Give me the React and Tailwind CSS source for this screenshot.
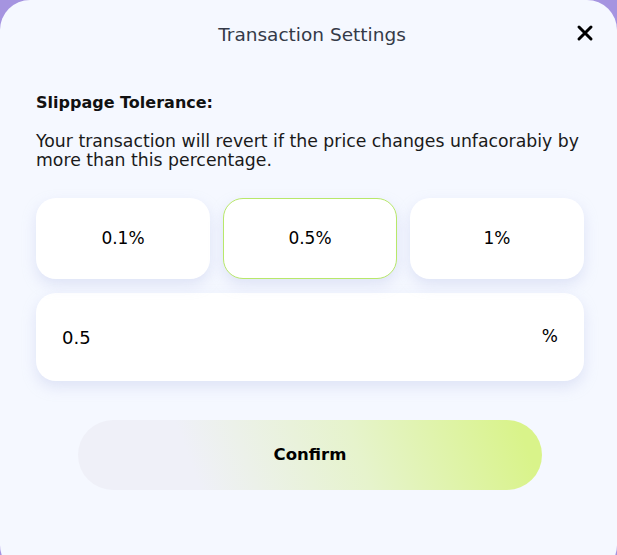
import React, { useState } from 'react'

const presets = ['0.1%', '0.5%', '1%']

export default function App() {
  const [selected, setSelected] = useState('0.5%')

  return (
    <div className="w-[617px] h-[555px] overflow-hidden bg-[#a594e0]" style={{ fontFamily: '"DejaVu Sans", "Noto Sans CJK KR", sans-serif' }}>
      <div className="w-[617px] h-[575px] rounded-[30px] bg-[#f5f8ff] pl-9 pr-[33px] pt-[21px]">
        {/* Header */}
        <div className="relative flex items-center justify-center h-[28px]">
          <h2 className="text-[18.5px] text-[#343a48] pl-[4px]">Transaction Settings</h2>
          <button className="absolute right-[-10px] top-[3px] text-black">
            <svg width="18" height="18" viewBox="0 0 18 18" fill="none" stroke="currentColor" strokeWidth="3" strokeLinecap="round">
              <path d="M3 3l12 12M15 3L3 15" />
            </svg>
          </button>
        </div>

        <p className="mt-[43px] text-[16px] font-bold text-[#111] leading-[22px]">Slippage Tolerance:</p>
        <p className="mt-[18px] text-[17.3px] text-[#1a1a1a] leading-[19px]">
          Your transaction will revert if the price changes unfacorabiy by more than this percentage.
        </p>

        {/* Presets */}
        <div className="mt-[28px] grid grid-cols-3 gap-[13px]">
          {presets.map((p) => (
            <button
              key={p}
              onClick={() => setSelected(p)}
              className={`h-[81px] rounded-[20px] bg-white text-[17px] text-black shadow-[0_6px_14px_rgba(180,190,230,0.35)] ${
                selected === p ? 'border border-[#b8e86a]' : 'border border-transparent'
              }`}
            >
              {p}
            </button>
          ))}
        </div>

        {/* Custom input */}
        <div className="mt-[14px] h-[88px] rounded-[20px] bg-white flex items-center justify-between px-[26px] shadow-[0_6px_14px_rgba(180,190,230,0.35)]">
          <span className="text-[18px] text-black">0.5</span>
          <span className="text-[17px] text-black">%</span>
        </div>

        {/* Confirm */}
        <div className="mt-[39px] flex justify-center">
          <button className="w-[464px] h-[70px] rounded-full bg-[linear-gradient(70deg,#eff0f8_25%,#e6f3cc_60%,#d9f38a_95%)] text-[16.5px] font-bold text-black">
            Confirm
          </button>
        </div>
      </div>
    </div>
  )
}
